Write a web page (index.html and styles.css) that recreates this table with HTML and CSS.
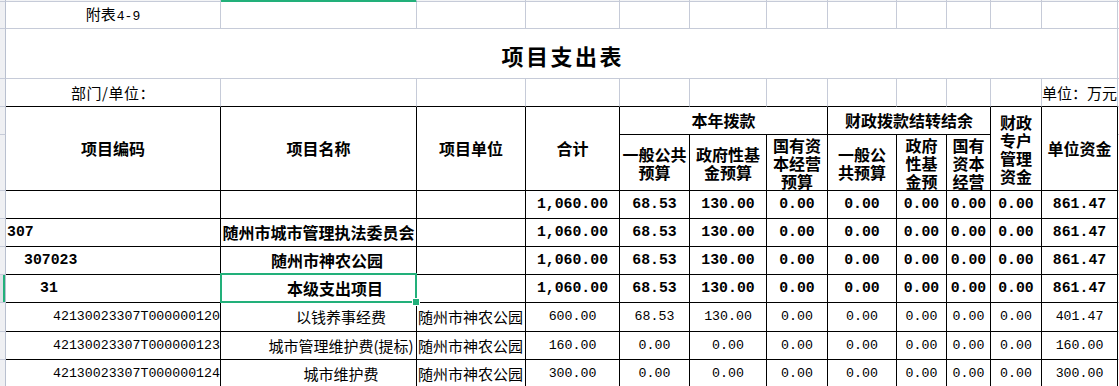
FILE: index.html
```html
<!DOCTYPE html>
<html lang="zh-CN">
<head>
<meta charset="utf-8">
<title>项目支出表</title>
<link rel="stylesheet" href="styles.css">
</head>
<body>
<div class="sheet">
  <!-- column header strip (cut off) -->
  <div class="c rh g"></div>
  <div class="c g colh"></div>
  <div class="c g colh on"></div>
  <div class="c g colh"></div>
  <div class="c g colh"></div>
  <div class="c g colh"></div>
  <div class="c g colh"></div>
  <div class="c g colh"></div>
  <div class="c g colh"></div>
  <div class="c g colh"></div>
  <div class="c g colh"></div>
  <div class="c g colh"></div>
  <div class="c g colh"></div>
  <div class="c g m"></div>

  <!-- row 1 -->
  <div class="c rh g"></div>
  <div class="c g"><span class="lbl">附表<span class="dg">4-9</span></span></div>
  <div class="c g"></div>
  <div class="c g"></div>
  <div class="c g"></div>
  <div class="c g"></div>
  <div class="c g"></div>
  <div class="c g"></div>
  <div class="c g"></div>
  <div class="c g"></div>
  <div class="c g"></div>
  <div class="c g"></div>
  <div class="c g"></div>
  <div class="c g m"></div>

  <!-- row 2: title -->
  <div class="c rh g"></div>
  <div class="c g title">项目支出表</div>
  <div class="c g m"></div>

  <!-- row 3 -->
  <div class="c rh g"></div>
  <div class="c g gb dept">部门/单位：</div>
  <div class="c g gb"></div>
  <div class="c g gb"></div>
  <div class="c g gb"></div>
  <div class="c g gb"></div>
  <div class="c g gb"></div>
  <div class="c g gb"></div>
  <div class="c g gb"></div>
  <div class="c g gb"></div>
  <div class="c g gb"></div>
  <div class="c g gb"></div>
  <div class="c g gb unit">单位：万元</div>
  <div class="c g m"></div>

  <!-- header row 4 -->
  <div class="c rh g"></div>
  <div class="c hd r2">项目编码</div>
  <div class="c hd r2">项目名称</div>
  <div class="c hd r2">项目单位</div>
  <div class="c hd r2">合计</div>
  <div class="c hd s3">本年拨款</div>
  <div class="c hd s3">财政拨款结转结余</div>
  <div class="c hd r2 ml">财政<br>专户<br>管理<br>资金</div>
  <div class="c hd r2">单位资金</div>
  <div class="c g m"></div>

  <!-- header row 5 -->
  <div class="c rh g"></div>
  <div class="c hd ml">一般公共<br>预算</div>
  <div class="c hd ml">政府性基<br>金预算</div>
  <div class="c hd ml">国有资<br>本经营<br>预算</div>
  <div class="c hd ml">一般公<br>共预算</div>
  <div class="c hd ml topal">政府<br>性基<br>金预<br>算</div>
  <div class="c hd ml topal">国有<br>资本<br>经营<br>预算</div>
  <div class="c g m"></div>

  <!-- row 6 -->
  <div class="c rh g"></div>
  <div class="c b"></div>
  <div class="c b"></div>
  <div class="c b"></div>
  <div class="c b bn">1,060.00</div>
  <div class="c b bn">68.53</div>
  <div class="c b bn">130.00</div>
  <div class="c b bn">0.00</div>
  <div class="c b bn">0.00</div>
  <div class="c b bn">0.00</div>
  <div class="c b bn">0.00</div>
  <div class="c b bn">0.00</div>
  <div class="c b bn">861.47</div>
  <div class="c g m"></div>

  <!-- row 7 -->
  <div class="c rh g"></div>
  <div class="c b bn code l0">307</div>
  <div class="c b">随州市城市管理执法委员会</div>
  <div class="c b"></div>
  <div class="c b bn">1,060.00</div>
  <div class="c b bn">68.53</div>
  <div class="c b bn">130.00</div>
  <div class="c b bn">0.00</div>
  <div class="c b bn">0.00</div>
  <div class="c b bn">0.00</div>
  <div class="c b bn">0.00</div>
  <div class="c b bn">0.00</div>
  <div class="c b bn">861.47</div>
  <div class="c g m"></div>

  <!-- row 8 -->
  <div class="c rh g"></div>
  <div class="c b bn code l1">307023</div>
  <div class="c b n1">随州市神农公园</div>
  <div class="c b"></div>
  <div class="c b bn">1,060.00</div>
  <div class="c b bn">68.53</div>
  <div class="c b bn">130.00</div>
  <div class="c b bn">0.00</div>
  <div class="c b bn">0.00</div>
  <div class="c b bn">0.00</div>
  <div class="c b bn">0.00</div>
  <div class="c b bn">0.00</div>
  <div class="c b bn">861.47</div>
  <div class="c g m"></div>

  <!-- row 9 (selected) -->
  <div class="c rh g on"></div>
  <div class="c b bn code l2">31</div>
  <div class="c b n2 sel">本级支出项目</div>
  <div class="c b"></div>
  <div class="c b bn">1,060.00</div>
  <div class="c b bn">68.53</div>
  <div class="c b bn">130.00</div>
  <div class="c b bn">0.00</div>
  <div class="c b bn">0.00</div>
  <div class="c b bn">0.00</div>
  <div class="c b bn">0.00</div>
  <div class="c b bn">0.00</div>
  <div class="c b bn">861.47</div>
  <div class="c g m"></div>

  <!-- row 10 -->
  <div class="c rh g"></div>
  <div class="c num code l3">42130023307T000000120</div>
  <div class="c n3">以钱养事经费</div>
  <div class="c left">随州市神农公园</div>
  <div class="c num">600.00</div>
  <div class="c num">68.53</div>
  <div class="c num">130.00</div>
  <div class="c num">0.00</div>
  <div class="c num">0.00</div>
  <div class="c num">0.00</div>
  <div class="c num">0.00</div>
  <div class="c num">0.00</div>
  <div class="c num">401.47</div>
  <div class="c g m"></div>

  <!-- row 11 -->
  <div class="c rh g"></div>
  <div class="c num code l3">42130023307T000000123</div>
  <div class="c n3">城市管理维护费(提标)</div>
  <div class="c left">随州市神农公园</div>
  <div class="c num">160.00</div>
  <div class="c num">0.00</div>
  <div class="c num">0.00</div>
  <div class="c num">0.00</div>
  <div class="c num">0.00</div>
  <div class="c num">0.00</div>
  <div class="c num">0.00</div>
  <div class="c num">0.00</div>
  <div class="c num">160.00</div>
  <div class="c g m"></div>

  <!-- row 12 -->
  <div class="c rh g"></div>
  <div class="c num code l3">42130023307T000000124</div>
  <div class="c n3">城市维护费</div>
  <div class="c left">随州市神农公园</div>
  <div class="c num">300.00</div>
  <div class="c num">0.00</div>
  <div class="c num">0.00</div>
  <div class="c num">0.00</div>
  <div class="c num">0.00</div>
  <div class="c num">0.00</div>
  <div class="c num">0.00</div>
  <div class="c num">0.00</div>
  <div class="c num">300.00</div>
  <div class="c g m"></div>
</div>
</body>
</html>
```

FILE: styles.css
```css
* { box-sizing: border-box; }

html, body {
  margin: 0;
  padding: 0;
  background: #ffffff;
  overflow: hidden;
}

body {
  font-family: "Noto Sans CJK SC", sans-serif;
  font-size: 15px;
  line-height: 1.2;
  color: #000000;
}

.sheet {
  display: grid;
  grid-template-columns: 6px 215px 196px 109px 94px 70px 77px 61px 69px 50px 44px 51px 76px 1fr;
  grid-template-rows: 2px 27px 50px 28px 28px 56px 28px 28px 28px 28px 29px 28px 28px;
  width: 1119px;
}

.c {
  display: flex;
  align-items: center;
  justify-content: center;
  min-width: 0;
  overflow: hidden;
  white-space: nowrap;
  border-right: 1px solid #000000;
  border-bottom: 1px solid #000000;
}

/* gridline (non-table) cells */
.g {
  border-right-color: #c6cbd8;
  border-bottom-color: #c6cbd8;
}
.gb { border-bottom-color: #000000; }

.m { border-right: none; }

/* row header strip */
.rh {
  grid-column: 1;
  background: #eff0f3;
  border-right-color: #b9c0cf;
}
.rh.on {
  background: #dfe2e7;
  box-shadow: inset -2px 0 0 #22b07a;
}

/* column header strip */
.colh { background: #f3f4f6; }
.colh.on {
  background: #22b07a;
  border-bottom-color: #22b07a;
}

.lbl { white-space: nowrap; }
.dg {
  font-family: "Liberation Mono", monospace;
  font-size: 13px;
  padding-left: 1px;
}

.title {
  grid-column: 2 / span 12;
  font-size: 22px;
  font-weight: 700;
  letter-spacing: 2.5px;
  padding-left: 2.5px;
  padding-top: 4px;
}

.dept { letter-spacing: 0.5px; }
.unit { justify-content: flex-end; overflow: visible; }

/* table header */
.hd {
  font-size: 16px;
  font-weight: 700;
}
.r2 { grid-row: span 2; }
.s3 { grid-column: span 3; }
.ml {
  white-space: normal;
  text-align: center;
  line-height: 18px;
}
.topal {
  align-items: flex-start;
  padding-top: 1px;
}

/* bold data rows */
.b {
  font-size: 16px;
  font-weight: 700;
}
.bn {
  font-family: "Liberation Mono", monospace;
  font-size: 14.8px;
  font-weight: 700;
}

.num {
  font-family: "Liberation Mono", monospace;
  font-size: 13.25px;
}

.code { justify-content: flex-start; }
.l0 { padding-left: 1px; }
.l1 { padding-left: 18px; }
.l2 { padding-left: 34px; }
.l3 { padding-left: 47px; }

.n1 { padding-left: 17px; }
.n2 { padding-left: 33px; }
.n3 { padding-left: 45px; }

.left {
  justify-content: flex-start;
  padding-left: 1px;
}

/* selected cell */
.sel {
  position: relative;
  overflow: visible;
}
.sel::after {
  content: "";
  position: absolute;
  left: -1px;
  top: -2px;
  right: -1px;
  bottom: -1px;
  border: 2px solid #22b07a;
  pointer-events: none;
}
.sel::before {
  content: "";
  position: absolute;
  right: -4px;
  bottom: -4px;
  width: 6px;
  height: 6px;
  background: #22b07a;
  border: 1px solid #ffffff;
  z-index: 2;
}
```
